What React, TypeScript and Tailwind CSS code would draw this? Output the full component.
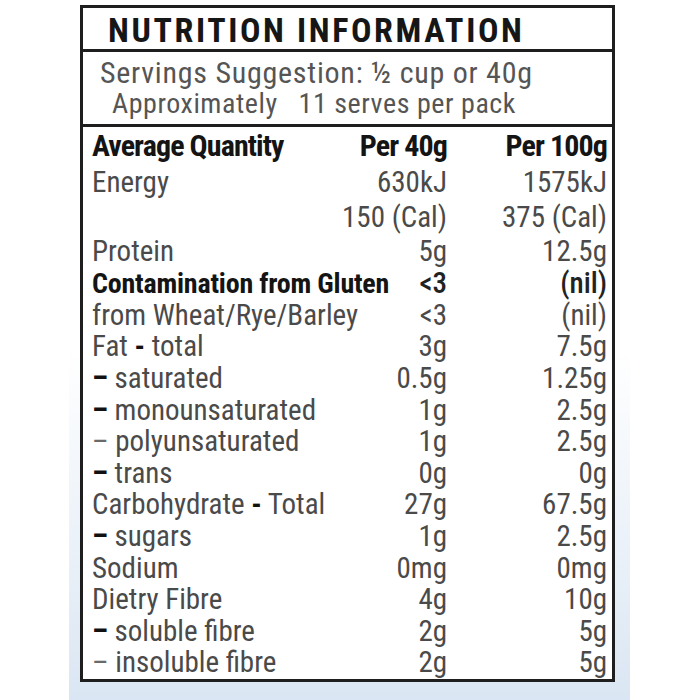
import React from "react";

type Row = {
  label: React.ReactNode;
  v1: string;
  v2: string;
  h: string;
  bold?: boolean;
};

const Dash = ({ light }: { light?: boolean }) => (
  <span className={light ? "text-[#6a6a6a]" : "text-[#111] font-bold"}>–</span>
);

const Hy = () => <span className="text-[#111] font-bold">-</span>;

const rows: Row[] = [
  { label: "Energy", v1: "630kJ", v2: "1575kJ", h: "h-[36px]" },
  { label: "", v1: "150 (Cal)", v2: "375 (Cal)", h: "h-[35px]" },
  { label: "Protein", v1: "5g", v2: "12.5g", h: "h-[33px]" },
  {
    label: (
      <span className="font-bold text-[#141414] text-[28px] tracking-[-0.2px]">Contamination from Gluten</span>
    ),
    v1: "<3",
    v2: "(nil)",
    h: "h-[31.6px]",
    bold: true,
  },
  { label: "from Wheat/Rye/Barley", v1: "<3", v2: "(nil)", h: "h-[31.6px]" },
  { label: <>Fat <Hy /> total</>, v1: "3g", v2: "7.5g", h: "h-[31.6px]" },
  { label: <><Dash /> saturated</>, v1: "0.5g", v2: "1.25g", h: "h-[31.6px]" },
  { label: <><Dash /> monounsaturated</>, v1: "1g", v2: "2.5g", h: "h-[31.6px]" },
  { label: <><Dash light /> polyunsaturated</>, v1: "1g", v2: "2.5g", h: "h-[31.6px]" },
  { label: <><Dash /> trans</>, v1: "0g", v2: "0g", h: "h-[31.6px]" },
  { label: <>Carbohydrate <Hy /> Total</>, v1: "27g", v2: "67.5g", h: "h-[31.6px]" },
  { label: <><Dash /> sugars</>, v1: "1g", v2: "2.5g", h: "h-[31.6px]" },
  { label: "Sodium", v1: "0mg", v2: "0mg", h: "h-[31.6px]" },
  { label: "Dietry Fibre", v1: "4g", v2: "10g", h: "h-[31.6px]" },
  { label: <><Dash /> soluble fibre</>, v1: "2g", v2: "5g", h: "h-[31.6px]" },
  { label: <><Dash light /> insoluble fibre</>, v1: "2g", v2: "5g", h: "h-[31.6px]" },
];

export default function App() {
  return (
    <div className="w-[700px] h-[700px] bg-white flex font-['Roboto_Condensed','Roboto',sans-serif]">
      <div className="ml-[69px] w-[561px] h-full bg-[linear-gradient(to_bottom,#ffffff_0%,#ffffff_50%,#e9f0f8_80%,#dae6f3_100%)] pt-[5px] pl-[11px]">
        <div className="w-[535px] border-[3px] border-[#1e1e1e] bg-white">
          {/* Title */}
          <div className="h-[44px] border-b-[3px] border-[#1e1e1e] flex items-center pl-[25px] pt-[2px]">
            <span className="text-[34px] leading-none font-bold tracking-[2.6px] text-[#161616]">
              NUTRITION INFORMATION
            </span>
          </div>
          {/* Servings */}
          <div className="h-[75px] border-b-[3px] border-[#1e1e1e] flex flex-col justify-center text-[#555] leading-[31px]">
            <div className="pl-[17px] text-[30px] tracking-[0.75px]">Servings Suggestion: ½ cup or 40g</div>
            <div className="pl-[29px] text-[28px] tracking-[0.55px] whitespace-pre">Approximately   11 serves per pack</div>
          </div>
          {/* Table */}
          <div className="pl-[9px] pr-[5px] text-[29px] leading-none text-[#4a4a4a]">
            <div className="h-[37px] grid grid-cols-[1fr_auto_160px] items-center font-bold text-[30px] text-[#141414] tracking-[-0.9px]">
              <span className="whitespace-nowrap">Average Quantity</span>
              <span className="text-right">Per 40g</span>
              <span className="text-right">Per 100g</span>
            </div>
            {rows.map((r, i) => (
              <div
                key={i}
                className={`${r.h} grid grid-cols-[1fr_auto_160px] items-center`}
              >
                <span className="whitespace-nowrap">{r.label}</span>
                <span className={`text-right whitespace-nowrap ${r.bold ? "text-[#222] font-medium" : ""}`}>{r.v1}</span>
                <span className={`text-right whitespace-nowrap ${r.bold ? "text-[#222] font-medium" : ""}`}>{r.v2}</span>
              </div>
            ))}
          </div>
        </div>
      </div>
    </div>
  );
}
